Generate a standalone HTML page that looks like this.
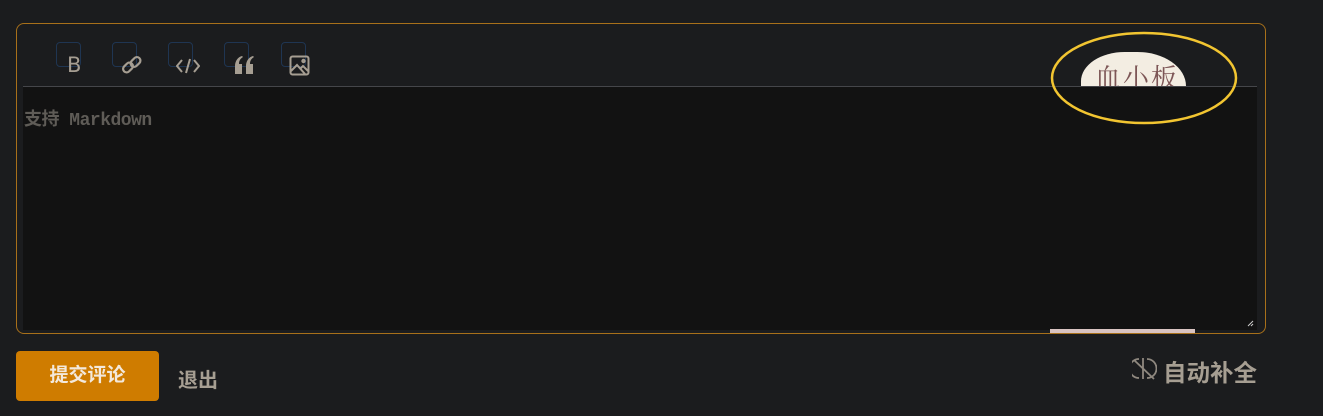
<!DOCTYPE html>
<html><head><meta charset="utf-8"><style>
html,body{margin:0;padding:0;width:1323px;height:416px;background:#1b1c1e;overflow:hidden;font-family:"Liberation Sans","Noto Sans CJK SC",sans-serif;position:relative}
.box{position:absolute;left:16px;top:23px;width:1250px;height:311px;border:1px solid #a8701a;border-radius:8px;box-sizing:border-box}
.sq{position:absolute;top:42px;width:25px;height:25px;border:1px solid #1f3552;border-radius:4px;box-sizing:border-box}
.ic{position:absolute;color:#a69e92}
.ta{position:absolute;left:23px;top:86px;width:1234px;height:244px;background:#121212;border-top:1px solid #45464a;box-sizing:border-box}
.ph{position:absolute;left:24px;top:105px;font:bold 18px "Liberation Mono","Noto Sans CJK SC",monospace;color:#5f5c57;letter-spacing:-0.5px}
.btn{position:absolute;left:16px;top:351px;width:143px;height:50px;background:#cf7c00;border-radius:4px;color:#f3e9dc;font:bold 19px "Liberation Sans","Noto Sans CJK SC",sans-serif;text-align:center;line-height:50px}
</style></head><body>
<div class="box"></div>
<div class="sq" style="left:56px"></div><div class="sq" style="left:112px"></div><div class="sq" style="left:168px"></div><div class="sq" style="left:224px"></div><div class="sq" style="left:281px"></div>
<div class="ic" style="left:67px;top:53px;font:21px 'DejaVu Sans',sans-serif">B</div>
<svg class="ic" style="left:121px;top:54px" width="22" height="22" viewBox="0 0 22 22" fill="none" stroke="#a69e92" stroke-width="2.2"><rect x="1.5" y="10" width="11" height="7" rx="3.5" transform="rotate(-45 7 13.5)"/><rect x="9" y="4.5" width="11" height="7" rx="3.5" transform="rotate(-45 14.5 8)"/></svg>
<svg class="ic" style="left:176px;top:57px" width="24" height="18" viewBox="0 0 24 18" fill="none" stroke="#a69e92" stroke-width="2"><path d="M6 3l-5 6 5 6M18 3l5 6-5 6M14 2l-4 14"/></svg>
<svg class="ic" style="left:234px;top:55px" width="22" height="20" viewBox="0 0 22 20" fill="#a69e92"><path d="M1 19v-8c0-5 3-9 7-10l1 1c-3 2-4 4-4 7h3v10zM12 19v-8c0-5 3-9 7-10l1 1c-3 2-4 4-4 7h3v10z"/></svg>
<svg class="ic" style="left:289px;top:55px" width="21" height="21" viewBox="0 0 21 21" fill="none" stroke="#a69e92" stroke-width="2"><rect x="1.5" y="1.5" width="18" height="18" rx="2"/><path d="M2 16l6-6 8 9M12 13l2-2 5 5"/><circle cx="14.5" cy="6" r="1.2"/></svg>
<div class="ta"></div>
<div style="position:absolute;left:1081px;top:52px;width:105px;height:34px;background:#f3ede2;border-radius:45px 50px 0 0 / 30px 35px 0 0"></div>
<div style="position:absolute;left:1095px;top:60px;font:26px 'Noto Serif CJK SC',serif;color:#7d5656;line-height:34px;height:26px;overflow:hidden;letter-spacing:2px">血小板</div>
<div style="position:absolute;left:1050px;top:329px;width:145px;height:4px;background:#d9c4c2"></div>
<div class="ph">支持 Markdown</div>
<svg style="position:absolute;left:0;top:0" width="1323" height="416"><ellipse cx="1144" cy="78" rx="92" ry="45" fill="none" stroke="#f2c531" stroke-width="2.5"/><path d="M1248 326l5-5M1251 326l2-2" stroke="#ccc" stroke-width="1"/></svg>
<div class="btn">提交评论</div>
<div style="position:absolute;left:178px;top:364px;font:bold 20px 'Liberation Sans','Noto Sans CJK SC',sans-serif;color:#a69e92">退出</div>
<svg style="position:absolute;left:1132px;top:356px" width="25" height="25" viewBox="0 0 25 25" fill="none" stroke="#8f887f" stroke-width="1.8"><path d="M7 3a9.5 9.5 0 0 0 0 19M15 3a9.5 9.5 0 0 1 0 19M11 2v21M2 4l20 19"/></svg>
<div style="position:absolute;left:1163px;top:354px;font:bold 23.5px 'Liberation Sans','Noto Sans CJK SC',sans-serif;color:#a69e92">自动补全</div>
</body></html>
